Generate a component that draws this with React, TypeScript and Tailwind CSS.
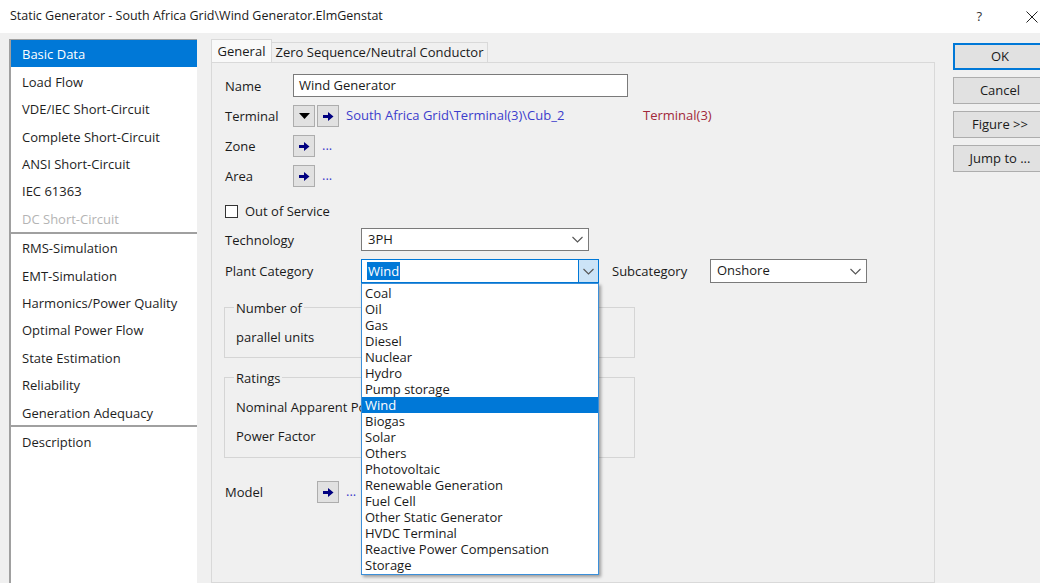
import React from 'react';

const navGroups: string[][] = [
  ['Basic Data', 'Load Flow', 'VDE/IEC Short-Circuit', 'Complete Short-Circuit', 'ANSI Short-Circuit', 'IEC 61363', 'DC Short-Circuit'],
  ['RMS-Simulation', 'EMT-Simulation', 'Harmonics/Power Quality', 'Optimal Power Flow', 'State Estimation', 'Reliability', 'Generation Adequacy'],
  ['Description'],
];

const categories = [
  'Coal', 'Oil', 'Gas', 'Diesel', 'Nuclear', 'Hydro', 'Pump storage', 'Wind', 'Biogas', 'Solar', 'Others',
  'Photovoltaic', 'Renewable Generation', 'Fuel Cell', 'Other Static Generator', 'HVDC Terminal',
  'Reactive Power Compensation', 'Storage',
];

const ArrowIcon = () => (
  <svg width="11" height="9" viewBox="0 0 11 9">
    <path d="M0 3h5V0l5.5 4.5L5 9V6H0z" fill="#000080" />
  </svg>
);

const Chevron = () => (
  <svg width="11" height="7" viewBox="0 0 11 7">
    <polyline points="0.5,1 5.5,6 10.5,1" fill="none" stroke="#555" strokeWidth="1.1" />
  </svg>
);

const ArrowButton = () => (
  <div className="w-[22px] h-[22px] flex items-center justify-center bg-[#e1e1e1] border border-[#adadad]">
    <ArrowIcon />
  </div>
);

const DropButton = () => (
  <div className="w-[22px] h-[22px] flex items-center justify-center bg-[#e1e1e1] border border-[#adadad]">
    <svg width="11" height="6" viewBox="0 0 11 6">
      <path d="M0 0h11L5.5 6z" fill="#000" />
    </svg>
  </div>
);

// form label, nudged down a little so the glyphs sit on the row's centre line
const Label = ({ children, className = '' }: { children: React.ReactNode; className?: string }) => (
  <span className={`pt-[2px] ${className}`}>{children}</span>
);

const DialogButton = ({ label, primary }: { label: string; primary?: boolean }) => (
  <div
    className={`h-[27px] w-[94px] flex items-center justify-center bg-[#e1e1e1] text-[#1a1a1a] ${
      primary ? 'border-2 border-[#0078d7]' : 'border border-[#adadad]'
    }`}
  >
    {label}
  </div>
);

export default function App() {
  return (
    <div className="w-[1040px] h-[583px] overflow-hidden flex flex-col bg-[#f0f0f0] font-['Open_Sans',sans-serif] text-[13px] text-[#1a1a1a]">
      {/* window title */}
      <div className="h-[33px] shrink-0 bg-white flex items-center pl-[10px]">
        <span className="flex-1 text-[12.5px]">Static Generator - South Africa Grid\Wind Generator.ElmGenstat</span>
        <span className="text-[13px] text-[#333] mr-[44px]">?</span>
        <svg width="12" height="12" viewBox="0 0 12 12" className="mr-[2px]">
          <path d="M0.5 0.5l11 11M11.5 0.5l-11 11" stroke="#222" strokeWidth="1" />
        </svg>
      </div>

      <div className="flex-1 flex pt-[6px] pl-[9px] min-h-0">
        {/* page list */}
        <div className="w-[188px] shrink-0 bg-white border-l-2 border-t border-[#a0a0a0]">
          {navGroups.map((group, gi) => (
            <div key={gi} className={gi < navGroups.length - 1 ? 'border-b-2 border-[#a0a0a0]' : ''}>
              {group.map((item) => {
                const active = item === 'Basic Data';
                const disabled = item === 'DC Short-Circuit';
                return (
                  <div
                    key={item}
                    className={`h-[27.4px] flex items-center pl-[11px] pt-[3px] ${
                      active ? 'bg-[#0078d7] text-white' : disabled ? 'text-[#b4b4b4]' : 'text-[#1e1e1e]'
                    }`}
                  >
                    {item}
                  </div>
                );
              })}
            </div>
          ))}
        </div>

        {/* tabs and form */}
        <div className="w-[724px] shrink-0 ml-[14px] flex flex-col">
          <div className="h-[23px] flex items-end">
            <div className="h-[23px] w-[61px] flex items-center justify-center pt-[1px] bg-[#f9f9f9] border border-b-0 border-[#d9d9d9]">
              General
            </div>
            <div className="h-[20px] w-[216px] flex items-center justify-center bg-[#f0f0f0] border border-l-0 border-b-0 border-[#d9d9d9]">
              Zero Sequence/Neutral Conductor
            </div>
          </div>

          <div className="flex-1 border border-[#d9d9d9] pl-[13px] flex flex-col">
            <div className="mt-[11px] h-[23px] flex items-center">
              <Label className="w-[68px]">Name</Label>
              <div className="w-[335px] h-[23px] bg-white border border-[#7a7a7a] flex items-center pl-[5px]">Wind Generator</div>
            </div>

            <div className="mt-[8px] h-[22px] flex items-center">
              <Label className="w-[68px]">Terminal</Label>
              <DropButton />
              <div className="ml-[2px]">
                <ArrowButton />
              </div>
              <span className="ml-[7px] w-[297px] text-[#3d3dcc]">South Africa Grid\Terminal(3)\Cub_2</span>
              <span className="text-[#a1283a]">Terminal(3)</span>
            </div>

            <div className="mt-[8px] h-[22px] flex items-center">
              <Label className="w-[68px]">Zone</Label>
              <ArrowButton />
              <span className="ml-[7px] text-[#3d3dcc]">...</span>
            </div>

            <div className="mt-[8px] h-[22px] flex items-center">
              <Label className="w-[68px]">Area</Label>
              <ArrowButton />
              <span className="ml-[7px] text-[#3d3dcc]">...</span>
            </div>

            <div className="mt-[14px] h-[20px] flex items-center">
              <div className="w-[13px] h-[13px] bg-white border border-[#333]" />
              <Label className="ml-[7px]">Out of Service</Label>
            </div>

            <div className="mt-[7px] h-[23px] flex items-center">
              <Label className="w-[136px]">Technology</Label>
              <div className="w-[228px] h-[23px] bg-white border border-[#7a7a7a] flex items-center justify-between pl-[6px] pr-[5px]">
                <span>3PH</span>
                <Chevron />
              </div>
            </div>

            <div className="mt-[8px] h-[24px] flex items-center relative z-10">
              <Label className="w-[136px]">Plant Category</Label>
              <div className="relative w-[238px] h-[24px] bg-white border border-[#0078d7] flex items-center">
                <span className="ml-[5px] px-[1px] bg-[#0078d7] text-white leading-[18px]">Wind</span>
                <div className="ml-auto w-[20px] h-full bg-[#cce4f7] border-l border-[#0078d7] flex items-center justify-center">
                  <Chevron />
                </div>
                {/* open list */}
                <div className="absolute left-[-1px] top-[23px] w-[238px] bg-white border border-[#3b8fd9] shadow-[2px_2px_3px_rgba(0,0,0,0.35)] py-[1px]">
                  {categories.map((c) => (
                    <div
                      key={c}
                      className={`h-[16px] leading-[16px] pl-[3px] ${c === 'Wind' ? 'bg-[#0078d7] text-white' : ''}`}
                    >
                      {c}
                    </div>
                  ))}
                </div>
              </div>
              <Label className="ml-[13px] w-[98px]">Subcategory</Label>
              <div className="w-[157px] h-[24px] bg-white border border-[#7a7a7a] flex items-center justify-between pl-[6px] pr-[5px]">
                <span>Onshore</span>
                <Chevron />
              </div>
            </div>

            <div className="mt-[24px] ml-[-1px] w-[411px] h-[51px] relative border border-[#d5d5d5] pl-[11px] pt-[20px]">
              <span className="absolute top-[-9px] left-[9px] px-[2px] bg-[#f0f0f0]">Number of</span>
              <div className="h-[20px] flex items-center">parallel units</div>
            </div>

            <div className="mt-[19px] ml-[-1px] w-[411px] h-[81px] relative border border-[#d5d5d5] pl-[11px] pt-[20px]">
              <span className="absolute top-[-9px] left-[9px] px-[2px] bg-[#f0f0f0]">Ratings</span>
              {/* label runs under the open list, so it is cut at the list's edge */}
              <div className="h-[20px] w-[125px] overflow-hidden whitespace-nowrap flex items-center">Nominal Apparent Power</div>
              <div className="mt-[9px] h-[20px] flex items-center">Power Factor</div>
            </div>

            <div className="mt-[23px] h-[22px] flex items-center">
              <Label className="w-[92px]">Model</Label>
              <ArrowButton />
              <span className="ml-[7px] text-[#3d3dcc]">...</span>
            </div>
          </div>
        </div>

        {/* dialog buttons */}
        <div className="ml-[18px] pt-[4px] flex flex-col gap-[7px] shrink-0">
          <DialogButton label="OK" primary />
          <DialogButton label="Cancel" />
          <DialogButton label="Figure >>" />
          <DialogButton label="Jump to ..." />
        </div>
      </div>
    </div>
  );
}
